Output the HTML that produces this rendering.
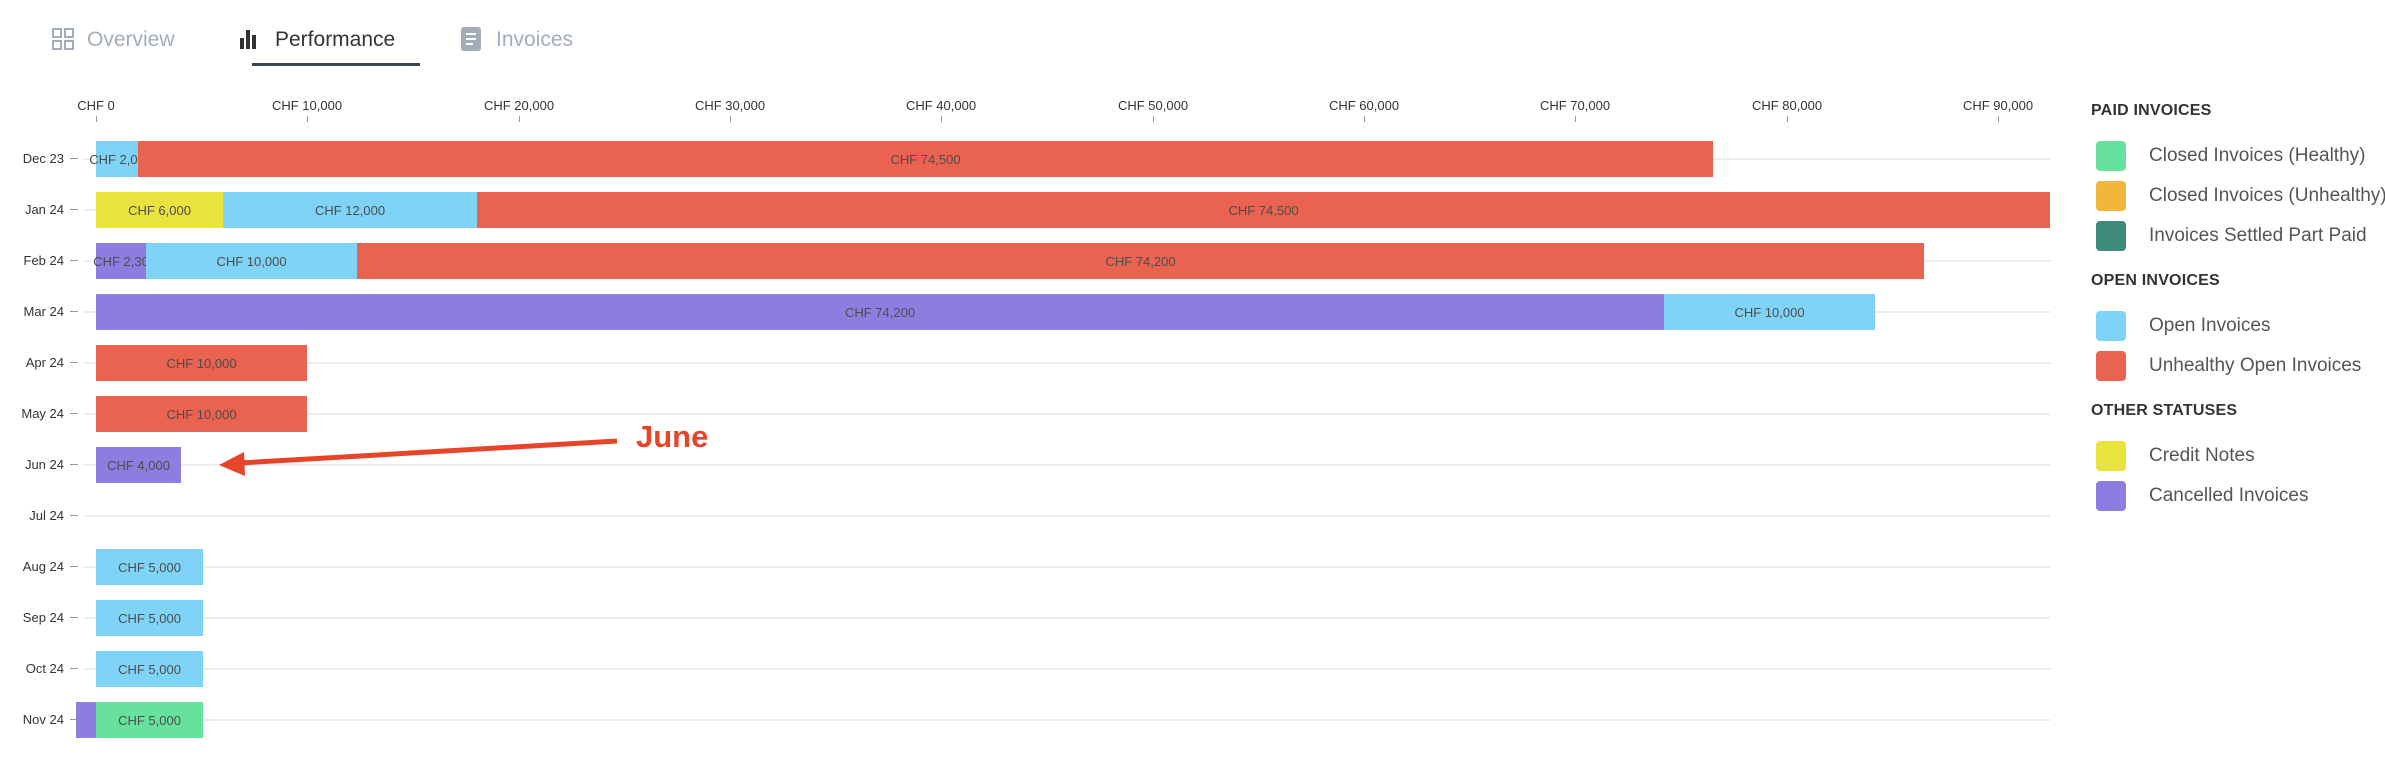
<!DOCTYPE html>
<html><head><meta charset="utf-8"><style>
*{margin:0;padding:0;box-sizing:border-box}
body{width:2385px;height:770px;background:#fff;position:relative;overflow:hidden;font-family:"Liberation Sans",Arial,sans-serif}
.a{position:absolute}
.tab{position:absolute;top:28px;font-size:21px;color:#a3adb9;line-height:24px}
.ax{position:absolute;top:98px;font-size:13px;color:#333;transform:translateX(-50%);white-space:nowrap}
.tk{position:absolute;top:116px;width:1px;height:6px;background:#999}
.rl{position:absolute;left:0;width:64px;text-align:right;font-size:13px;color:#333;white-space:nowrap}
.rt{position:absolute;left:70px;width:8px;height:1px;background:#999}
.gl{position:absolute;left:84px;width:1966px;height:2px;background:#ececec}
.b{position:absolute;height:36px;display:flex;align-items:center;justify-content:center;font-size:13px;color:#4d4d4d;white-space:nowrap;overflow:visible}
.lh{position:absolute;left:2091px;font-size:16px;font-weight:bold;color:#333;letter-spacing:0.2px}
.li{position:absolute;left:2096px;height:30px;display:flex;align-items:center}
.sw{width:30px;height:30px;border-radius:4px;margin-right:23px}
.lt{font-size:19px;color:#555;white-space:nowrap}
</style></head><body>
<!-- tabs -->
<svg class="a" style="left:52px;top:28px" width="22" height="22" viewBox="0 0 22 22" fill="none" stroke="#a3adb9" stroke-width="2"><rect x="1" y="1" width="8" height="8"/><rect x="13" y="1" width="8" height="8"/><rect x="1" y="13" width="8" height="8"/><rect x="13" y="13" width="8" height="8"/></svg>
<div class="tab" style="left:87px">Overview</div>
<svg class="a" style="left:240px;top:29px" width="16" height="20" viewBox="0 0 16 20" fill="#333"><rect x="0" y="9" width="4" height="11"/><rect x="6" y="1" width="4" height="19"/><rect x="12" y="6" width="4" height="14"/></svg>
<div class="tab" style="left:275px;color:#333">Performance</div>
<div class="a" style="left:252px;top:63px;width:168px;height:3px;background:#3a4452"></div>
<svg class="a" style="left:461px;top:27px" width="20" height="24" viewBox="0 0 20 24"><rect x="0" y="0" width="20" height="24" rx="3" fill="#a3adb9"/><rect x="5" y="6" width="10" height="2" fill="#fff"/><rect x="5" y="11" width="10" height="2" fill="#fff"/><rect x="5" y="16" width="7" height="2" fill="#fff"/></svg>
<div class="tab" style="left:496px">Invoices</div>

<!-- axis -->
<div class="ax" style="left:96px">CHF 0</div><div class="tk" style="left:96px"></div>
<div class="ax" style="left:307px">CHF 10,000</div><div class="tk" style="left:307px"></div>
<div class="ax" style="left:519px">CHF 20,000</div><div class="tk" style="left:519px"></div>
<div class="ax" style="left:730px">CHF 30,000</div><div class="tk" style="left:730px"></div>
<div class="ax" style="left:941px">CHF 40,000</div><div class="tk" style="left:941px"></div>
<div class="ax" style="left:1153px">CHF 50,000</div><div class="tk" style="left:1153px"></div>
<div class="ax" style="left:1364px">CHF 60,000</div><div class="tk" style="left:1364px"></div>
<div class="ax" style="left:1575px">CHF 70,000</div><div class="tk" style="left:1575px"></div>
<div class="ax" style="left:1787px">CHF 80,000</div><div class="tk" style="left:1787px"></div>
<div class="ax" style="left:1998px">CHF 90,000</div><div class="tk" style="left:1998px"></div>

<!-- rows: centers 158 + 51*i -->
<div class="rl" style="top:151px">Dec 23</div><div class="rt" style="top:158px"></div><div class="gl" style="top:158px"></div>
<div class="rl" style="top:202px">Jan 24</div><div class="rt" style="top:209px"></div><div class="gl" style="top:209px"></div>
<div class="rl" style="top:253px">Feb 24</div><div class="rt" style="top:260px"></div><div class="gl" style="top:260px"></div>
<div class="rl" style="top:304px">Mar 24</div><div class="rt" style="top:311px"></div><div class="gl" style="top:311px"></div>
<div class="rl" style="top:355px">Apr 24</div><div class="rt" style="top:362px"></div><div class="gl" style="top:362px"></div>
<div class="rl" style="top:406px">May 24</div><div class="rt" style="top:413px"></div><div class="gl" style="top:413px"></div>
<div class="rl" style="top:457px">Jun 24</div><div class="rt" style="top:464px"></div><div class="gl" style="top:464px"></div>
<div class="rl" style="top:508px">Jul 24</div><div class="rt" style="top:515px"></div><div class="gl" style="top:515px"></div>
<div class="rl" style="top:559px">Aug 24</div><div class="rt" style="top:566px"></div><div class="gl" style="top:566px"></div>
<div class="rl" style="top:610px">Sep 24</div><div class="rt" style="top:617px"></div><div class="gl" style="top:617px"></div>
<div class="rl" style="top:661px">Oct 24</div><div class="rt" style="top:668px"></div><div class="gl" style="top:668px"></div>
<div class="rl" style="top:712px">Nov 24</div><div class="rt" style="top:719px"></div><div class="gl" style="top:719px"></div>

<!-- bars -->
<div class="b" style="top:141px;left:96px;width:42px;background:#7fd3f7">CHF 2,00</div>
<div class="b" style="top:141px;left:138px;width:1575px;background:#ea6250">CHF 74,500</div>

<div class="b" style="top:192px;left:96px;width:127px;background:#e9e340">CHF 6,000</div>
<div class="b" style="top:192px;left:223px;width:254px;background:#7fd3f7">CHF 12,000</div>
<div class="b" style="top:192px;left:477px;width:1573px;background:#ea6250">CHF 74,500</div>

<div class="b" style="top:243px;left:96px;width:50px;background:#8e7ce0">CHF 2,30</div>
<div class="b" style="top:243px;left:146px;width:211px;background:#7fd3f7">CHF 10,000</div>
<div class="b" style="top:243px;left:357px;width:1567px;background:#ea6250">CHF 74,200</div>

<div class="b" style="top:294px;left:96px;width:1568px;background:#8e7ce0">CHF 74,200</div>
<div class="b" style="top:294px;left:1664px;width:211px;background:#7fd3f7">CHF 10,000</div>

<div class="b" style="top:345px;left:96px;width:211px;background:#ea6250">CHF 10,000</div>
<div class="b" style="top:396px;left:96px;width:211px;background:#ea6250">CHF 10,000</div>
<div class="b" style="top:447px;left:96px;width:85px;background:#8e7ce0">CHF 4,000</div>
<div class="b" style="top:549px;left:96px;width:107px;background:#7fd3f7">CHF 5,000</div>
<div class="b" style="top:600px;left:96px;width:107px;background:#7fd3f7">CHF 5,000</div>
<div class="b" style="top:651px;left:96px;width:107px;background:#7fd3f7">CHF 5,000</div>
<div class="b" style="top:702px;left:76px;width:20px;background:#8e7ce0"></div>
<div class="b" style="top:702px;left:96px;width:107px;background:#67e29e">CHF 5,000</div>

<!-- annotation -->
<svg class="a" style="left:0;top:0" width="2385" height="770">
<line x1="617" y1="441" x2="240" y2="463" stroke="#e8442a" stroke-width="5"/>
<polygon points="219,465 244,452 245,476" fill="#e8442a"/>
</svg>
<div class="a" style="left:636px;top:419px;font-size:31px;font-weight:bold;color:#e8442a">June</div>

<!-- legend -->
<div class="lh" style="top:102px">PAID INVOICES</div>
<div class="li" style="top:141px"><div class="sw" style="background:#67e29e"></div><div class="lt">Closed Invoices (Healthy)</div></div>
<div class="li" style="top:181px"><div class="sw" style="background:#f2b73a"></div><div class="lt">Closed Invoices (Unhealthy)</div></div>
<div class="li" style="top:221px"><div class="sw" style="background:#3e8a7c"></div><div class="lt">Invoices Settled Part Paid</div></div>
<div class="lh" style="top:272px">OPEN INVOICES</div>
<div class="li" style="top:311px"><div class="sw" style="background:#7fd3f7"></div><div class="lt">Open Invoices</div></div>
<div class="li" style="top:351px"><div class="sw" style="background:#ea6250"></div><div class="lt">Unhealthy Open Invoices</div></div>
<div class="lh" style="top:402px">OTHER STATUSES</div>
<div class="li" style="top:441px"><div class="sw" style="background:#e9e340"></div><div class="lt">Credit Notes</div></div>
<div class="li" style="top:481px"><div class="sw" style="background:#8e7ce0"></div><div class="lt">Cancelled Invoices</div></div>
</body></html>
